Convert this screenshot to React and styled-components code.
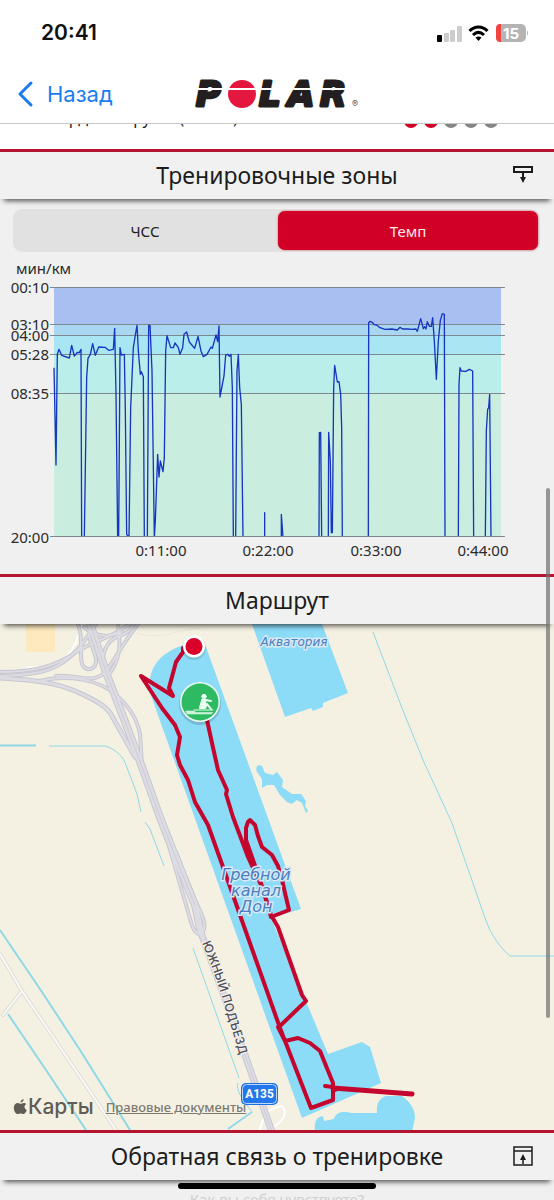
import React, { useState } from "react";
import styled, { createGlobalStyle } from "styled-components";

const RED = "#d10027";

const GlobalStyle = createGlobalStyle`
  *, *::before, *::after { box-sizing: border-box; }
  html, body { margin: 0; background: #f0f0f0; overflow: hidden; }
  body { font-family: "Noto Sans", "Open Sans", sans-serif; color: #1c1c1c; }
`;

const Screen = styled.div`
  position: relative;
  display: flex;
  flex-direction: column;
  height: 100vh;
  overflow: hidden;
  background: #f0f0f0;
`;

const StatusBar = styled.div`
  display: flex;
  flex: none;
  align-items: center;
  justify-content: space-between;
  height: 66px;
  padding: 0 26px 0 41px;
  background: #fff;
`;

const Clock = styled.time`
  font: 600 21px/22px Inter, sans-serif;
  color: #111;
`;

const StatusIcons = styled.svg`
  display: block;
  width: 92px;
  height: 20px;
`;

const NavBar = styled.header`
  display: grid;
  flex: none;
  grid-template-columns: 1fr auto 1fr;
  align-items: center;
  height: 57px;
  padding: 0 17px 2px;
  background: #fff;
`;

const BackButton = styled.button`
  display: flex;
  align-items: center;
  gap: 13px;
  justify-self: start;
  padding: 0;
  border: 0;
  background: none;
  color: #1a7cf0;
  font: 400 22px/28px Inter, sans-serif;

  svg { display: block; width: 17px; height: 28px; }
`;

const Logo = styled.svg`
  display: block;
  width: 170px;
  height: 30px;
  overflow: visible;
`;

const Content = styled.main`
  display: flex;
  flex: 1;
  flex-direction: column;
  min-height: 0;
  overflow: hidden;
  border-top: 1px solid #c8c8c8;
`;

const LoadRow = styled.div`
  display: flex;
  flex: none;
  align-items: flex-start;
  justify-content: space-between;
  height: 25px;
  padding: 0 56px 0 50px;
  overflow: hidden;
  background: #fff;
`;

const LoadLabel = styled.span`
  margin-top: -17px;
  font-size: 16px;
  line-height: 22px;
`;

const Dots = styled.span`
  display: flex;
  gap: 6px;
  margin-top: -10px;
`;

const Dot = styled.i`
  width: 14px;
  height: 14px;
  border-radius: 50%;
  background: ${(p) => (p.$on ? RED : "#858585")};
`;

const SectionHeader = styled.div`
  position: relative;
  z-index: 1;
  display: grid;
  flex: none;
  grid-template-columns: 1fr auto 1fr;
  align-items: center;
  height: 50px;
  padding: 0 21px 2px;
  border-top: 3px solid #b51530;
  background: #f1f1f1;
  box-shadow: 0 6px 5px -4px rgba(0, 0, 0, 0.65);
`;

const SectionTitle = styled.h2`
  grid-column: 2;
  margin: 0;
  font-size: 23px;
  font-weight: 400;
  line-height: 32px;
`;

const IconButton = styled.button`
  justify-self: end;
  padding: 0;
  border: 0;
  background: none;

  svg { display: block; width: 20px; height: 22px; }
`;

const Tabs = styled.div`
  display: flex;
  flex: none;
  gap: 3px;
  height: 43px;
  margin: 10px 14px 0 13px;
  padding: 2px;
  border-radius: 9px;
  background: #e1e1e1;
`;

const Tab = styled.button`
  flex: 1;
  padding: 0;
  border: 0;
  border-radius: 7px;
  background: ${(p) => (p.$active ? RED : "transparent")};
  box-shadow: ${(p) => (p.$active ? "0 0 2px #e0405c" : "none")};
  color: ${(p) => (p.$active ? "#ffe9ec" : "#1c1c1c")};
  font: 400 15px/20px "Noto Sans", sans-serif;
`;

const Chart = styled.svg`
  display: block;
  flex: none;
  width: 100%;

  text { font: 400 15px "Noto Sans", sans-serif; fill: #2b2b2b; }
`;

const MapPanel = styled.div`
  position: relative;
  flex: none;
`;

const MapCanvas = styled.svg`
  display: block;
  width: 100%;
  background: #f5f1e2;
`;

const MapCredits = styled.div`
  position: absolute;
  bottom: 10px;
  left: 13px;
  display: flex;
  align-items: center;
  gap: 12px;
  color: #5f5d56;
`;

const Brand = styled.span`
  display: flex;
  align-items: center;
  font: 500 21px/26px Inter, sans-serif;

  svg { display: block; width: 15px; height: 18px; }
`;

const LegalLink = styled.a`
  color: #7d7a72;
  font: 500 13px/16px "Noto Sans", sans-serif;
  text-decoration: underline;
`;

const Question = styled.p`
  flex: none;
  margin: 9px 0 0;
  color: #cfcfcf;
  font-size: 15px;
  line-height: 20px;
  text-align: center;
`;

const ScrollThumb = styled.div`
  position: absolute;
  z-index: 2;
  top: 488px;
  right: 4px;
  width: 4px;
  height: 530px;
  border-radius: 2px;
  background: rgba(110, 110, 110, 0.7);
`;

const HomeIndicator = styled.div`
  position: absolute;
  z-index: 2;
  bottom: 11px;
  left: 50%;
  width: 198px;
  height: 6px;
  margin-left: -99px;
  border-radius: 3px;
  background: #000;
`;

const zones = [
  { label: "00:10", top: 287, bottom: 324, fill: "#a9bff2" },
  { label: "03:10", top: 324, bottom: 335, fill: "#a9d6f0" },
  { label: "04:00", top: 335, bottom: 354, fill: "#a9e6f3" },
  { label: "05:28", top: 354, bottom: 393, fill: "#baeeea" },
  { label: "08:35", top: 393, bottom: 537, fill: "#c9eedf" },
];

const times = [
  { x: 161, label: "0:11:00" },
  { x: 268, label: "0:22:00" },
  { x: 376, label: "0:33:00" },
  { x: 483, label: "0:44:00" },
];

// Pace samples in thirds of a chart unit.
const paceFirstHalf =
  "162,320 168,612 172,280 177,265 185,283 208,291 215,253 223,285 232,274 238,275 243,265 245,829 253,829 260,350 264,292 271,280 278,248 286,283 296,258 315,259 326,268 340,265 344,202 348,400 353,829 356,829 360,260 364,282 373,280 376,450 380,820 387,829 392,440 400,260 406,222 411,193 415,270 421,340 424,332 430,347 433,829 442,829 446,193 450,193 456,330 463,829 466,780 473,580 477,648 481,600 489,632 493,590 497,270 501,224 512,260 520,260 525,246 535,260 540,280 548,260 552,220 560,213 568,243 584,262 594,226 603,270 610,287 621,280 633,258 637,262 648,222 653,242 657,195 660,408 672,345 677,282 684,280 688,286 693,280 697,380 700,829 707,829 711,330 715,280 719,380 724,430 729,829 794,829 794,755 794,829";
const paceSecondHalf =
  "34,829 34,760 39,829 147,829 148,515 152,514 155,829 175,829 176,514 181,600 184,815 187,815 191,380 194,313 202,363 207,362 212,400 215,500 217,829 295,829 296,185 300,181 308,185 312,191 320,192 330,200 345,205 365,204 382,207 390,199 398,204 415,204 425,205 438,204 442,211 452,173 460,203 464,197 468,204 472,182 478,196 484,196 488,170 493,240 499,355 505,240 511,178 517,158 523,160 525,829 565,829 567,370 570,320 574,330 588,331 598,325 608,330 611,829 646,829 649,510 653,445 656,440 659,400 663,829";

function PaceChart() {
  return (
    <Chart viewBox="0 252 554 322" role="img" aria-label="Темп, мин/км">
      <text x="16" y="274">мин/км</text>
      {zones.map((z) => (
        <rect key={z.label} x="54" y={z.top} width="447" height={z.bottom - z.top} fill={z.fill} />
      ))}
      {zones.map((z) => (
        <line key={z.label} x1="50" x2="505" y1={z.top + 0.5} y2={z.top + 0.5} stroke="#7f8790" />
      ))}
      {zones.map((z) => (
        <text key={z.label} x="49" y={z.top + 6} textAnchor="end">{z.label}</text>
      ))}
      <text x="49" y="543" textAnchor="end">20:00</text>
      {times.map((t) => (
        <text key={t.label} x={t.x} y="556" textAnchor="middle">{t.label}</text>
      ))}
      <clipPath id="plot"><rect x="50" y="287" width="455" height="249" /></clipPath>
      <g clipPath="url(#plot)">
        <g fill="none" stroke="#1636c0" strokeWidth="4" strokeLinejoin="round">
          <polyline points={paceFirstHalf} transform="translate(0 261) scale(.33333)" />
          <polyline points={paceSecondHalf} transform="translate(270 261) scale(.33333)" />
        </g>
      </g>
      <line x1="50" x2="505" y1="536.500" y2="536.500" stroke="#7f8790" />
    </Chart>
  );
}

const roads = [
  { w: 2, d: "M0 672 C40 672 58 664 75 653 C90 642 108 640 130 624" },
  { w: 2, d: "M0 676 C30 675 50 672 62 663 C78 652 84 642 96 624" },
  { w: 3, d: "M0 678 C40 680 62 684 84 695 C100 703 108 708 112 716 L135 757" },
  { w: 2, d: "M40 681 C58 676 88 676 110 690 C126 702 137 718 140 734 L142 766" },
  { w: 2, d: "M56 676 C76 674 90 684 103 674 C112 666 118 650 138 624" },
  { w: 2, d: "M110 673 C120 658 121 646 118 624" },
  { w: 2, d: "M78 624 C84 640 79 652 82 664 C86 672 95 670 96 662 C97 650 84 640 92 624" },
  { w: 2, d: "M104 672 C100 656 106 640 119 636 C126 634 131 630 134 624" },
  { w: 2, d: "M84 627 C96 638 110 637 122 632" },
  { w: 6, d: "M89 620 L107 675 L124 719 L142 767 L161 820 L179 866 L195 905 L201 933" },
  { w: 2, d: "M169 846 L180 884 L191 922 C194 934 202 938 204 929 C206 920 199 909 194 898 L176 852" },
  { w: 5, d: "M200 930 L219 982 L244 1052 L272 1132" },
];

const routePath =
  "M207 720 L212 743 L218 770 L227 790 L226 794 L233 817 L248 857 L254 870 L262 887 L270 913 L271 917 L289 910 L282 880 L278 866 L272 855 L262 847 L258 836 L255 825 L250 820 L248 822 L246 828 L246 840 L253 860 L260 880 L271 915 L278 927 L302 995 L306 1001 L281 1025 L278 1027 L285 1041 L298 1038 L310 1043 L320 1051 L333 1083 L333 1100 L311 1108 L280 1028 L223 867 L208 825 L195 802 L188 780 L180 765 L177 755 L180 737 L175 725 L162 708 L141 676 L173 696 L169 688 L176 662 L183 652 L183 648";

const waterLabel = {
  fontFamily: '"DejaVu Sans", sans-serif',
  fontStyle: "oblique",
  fontWeight: 400,
  fill: "#4a80c0",
  stroke: "#d5e9f7",
  strokeWidth: 3,
  paintOrder: "stroke",
  textAnchor: "middle",
};

function RouteMap() {
  return (
    <MapPanel>
      <MapCanvas viewBox="0 624 554 506" role="img" aria-label="Маршрут тренировки">
        <rect x="26" y="620" width="29" height="32" rx="2" fill="#fde9bd" />
        <g fill="#8cdbf7">
          <path d="M149 690 C149 664 162 651 190 643 L206 647 L301 909 L271 918 L328 1054 L362 1042 L370 1047 L381 1083 L302 1118 Z" />
          <path d="M252 624 L285 717 L311 708 L313 711 L323 707 L323 703 L348 693 L322 624 Z" />
          <path d="M257 772 C255 766 258 764 262 766 L265 773 L273 775 L277 772 L283 780 L282 787 L292 794 L301 794 L306 801 L305 806 L308 811 L306 813 L302 803 L297 800 L292 804 L287 802 L280 795 L274 785 L267 785 L262 788 L262 779 Z" />
          <path d="M315 1132 C314 1122 316 1117 323 1116 L324 1121 L334 1119 C336 1111 344 1111 352 1113 L377 1113 C376 1103 380 1098 386 1096 L402 1096 C412 1103 415 1111 415 1118 L412 1132 Z" />
        </g>
        <g fill="none" stroke="#8fd8e8" strokeWidth="1">
          <path d="M0 745.500 H36" strokeWidth="2" />
          <path d="M49 746 H106 C118 751 123 757 126 765 L137 794 L141 812 M145 822 L150 829 L164 866" />
          <path d="M373 632 L402 708 L423 760 L452 823 L485 918 C492 938 502 949 510 956 H554" />
          <path d="M0 930 L42 992 L80 1050 L130 1130 M8 1014 L46 1070 L86 1130 M252 1112 L228 1129" strokeWidth="2" />
          <path d="M193 948 L239 1078 M238 1083 C236 1090 241 1098 252 1112" />
        </g>
        <g fill="none" strokeLinecap="round">
          <path d="M0 954 L22 991 L116 1130 M22 991 L3 1015" stroke="#dedcda" strokeWidth="4" />
          <path d="M0 954 L22 991 L116 1130 M22 991 L3 1015" stroke="#fbf9f4" strokeWidth="2" />
          <path d="M27 672 C22 665 36 668 52 666 C66 660 72 652 76 642 L82 624 M260 1130 C264 1111 271 1108 282 1106 C288 1112 284 1120 275 1126" stroke="#fff" strokeWidth="2" />
          <path d="M136 633 C158 640 170 632 200 628" stroke="#eae7e1" />
          {roads.map((r) => <path key={r.d} d={r.d} stroke="#c8c6d1" strokeWidth={r.w + 2} />)}
          {roads.map((r) => <path key={r.d} d={r.d} stroke="#dddce3" strokeWidth={r.w} />)}
          <path d="M89 620 L107 675 L124 719 L142 767 L161 820 L179 866 L195 905 M244 1052 L272 1132" stroke="#cdccd6" />
        </g>
        <g fill="none" stroke="#c4062f" strokeWidth="4" strokeLinecap="round" strokeLinejoin="round">
          <path d={routePath} />
          <path d="M325 1086 L333 1087" />
          <path d="M333 1088 L412 1094" strokeWidth="5" />
          <path d="M332 1087 L339 1089 L333 1092 Z" fill="#c4062f" strokeWidth="2" />
        </g>

        <text x="294" y="646" fontSize="12" {...waterLabel}>Акватория</text>
        <text x="256" y="880" fontSize="16" {...waterLabel}>Гребной</text>
        <text x="256" y="896" fontSize="16" {...waterLabel}>канал</text>
        <text x="256" y="912" fontSize="16" {...waterLabel}>Дон</text>

        <path id="road-name" d="M202 943 C212 967 217 980 224 1004 C230 1026 237 1042 246 1080" fill="none" />
        <text fontFamily="Inter, sans-serif" fontSize="12" fontWeight="500" fill="#4f4d57" stroke="#f7f4ea" strokeWidth="2" paintOrder="stroke">
          <textPath href="#road-name">ЮЖНЫЙ ПОДЪЕЗД</textPath>
        </text>

        <rect x="241" y="1083" width="37" height="22" rx="5" fill="#1d6fe0" />
        <rect x="242.500" y="1084.500" width="34" height="19" rx="4" fill="#2377ea" stroke="#b9d8fb" />
        <text x="259.500" y="1098" fontFamily="Roboto, sans-serif" fontSize="12" fontWeight="700" fill="#fff" textAnchor="middle">A135</text>

        <circle cx="194" cy="648" r="12" fill="#000" opacity=".12" />
        <circle cx="194" cy="646.500" r="11" fill="#fff" />
        <circle cx="194" cy="646.500" r="8.500" fill="#da0029" />
        <circle cx="200" cy="704" r="21" fill="#000" opacity=".15" />
        <circle cx="200" cy="702" r="20" fill="#e9f9ee" />
        <circle cx="200" cy="702" r="18.500" fill="#2dba62" />
        <g fill="#eafff0" stroke="#eafff0" strokeLinecap="round" strokeLinejoin="round">
          <circle cx="204" cy="696.500" r="2.200" />
          <path d="M202 700 L206 700 L211 701 M202 701 L200 708 H205 L207 704 L211 709" strokeWidth="2" fill="none" />
          <path d="M202 701 L206 701 L205 707 L200 708 Z" />
          <path d="M186 711 H194 L196 712.500 H213 L211 714 H187 Z" strokeWidth=".6" opacity=".85" />
          <path d="M194 710 H213" strokeWidth="1" />
        </g>
      </MapCanvas>
      <MapCredits>
        <Brand>
          <svg viewBox="0 0 15 18" aria-hidden="true" fill="currentColor">
            <path d="M10.700 1c.1 1.800-1.500 3.500-3.200 3.500C7.300 2.800 9 1.200 10.700 1zM13.200 6.100c-2.500 1.500-2 5 .6 6-.7 2-2 4-3.500 4-1.100 0-1.500-.7-2.800-.7s-1.700.7-2.800.7C2.500 16.100.8 12.600.8 9.800c0-3.200 2-4.900 4-4.900 1.200 0 2.100.8 2.900.8.800 0 1.700-.8 3.200-.8 1 0 1.800.5 2.300 1.200z" />
          </svg>
          Карты
        </Brand>
        <LegalLink href="#legal">Правовые документы</LegalLink>
      </MapCredits>
    </MapPanel>
  );
}

function PhoneStatus() {
  return (
    <StatusIcons viewBox="0 0 92 20" role="img" aria-label="Сеть, Wi-Fi, заряд 15%">
      <rect x="1" y="12" width="5" height="7" rx="1" fill="#000" />
      <rect x="8" y="10" width="5" height="9" rx="1" fill="#ccc" />
      <rect x="14" y="7" width="5" height="12" rx="1" fill="#ccc" />
      <rect x="21" y="3" width="5" height="16" rx="1" fill="#ccc" />
      <g fill="none" stroke="#000" strokeWidth="3">
        <path d="M33.500 8 C38.500 2.600 46.500 2.600 51.500 8" />
        <path d="M37 12 C40.500 8.700 44.500 8.700 48 12" />
      </g>
      <path d="M39.500 14.500 C41.500 13 43.500 13 45.500 14.500 L42.500 18 Z" />
      <rect x="60" y="1" width="30" height="18" rx="5" fill="#b4b4b4" />
      <path d="M64 1 H65 V19 H64 C61.500 19 60 17.500 60 14.500 V5.500 C60 2.500 61.500 1 64 1 Z" fill="#f0453f" />
      <path d="M91 7.500 C92.500 8.500 92.500 11.500 91 12.500 Z" fill="#b4b4b4" />
      <text x="75" y="15.500" fontFamily="Inter, sans-serif" fontSize="15" fontWeight="700" fill="#fff" textAnchor="middle">15</text>
    </StatusIcons>
  );
}

function PolarLogo() {
  const letter = {
    fontFamily: '"DejaVu Sans", sans-serif',
    fontSize: 34,
    fontWeight: 700,
    fontStyle: "oblique",
    fill: "#231f20",
    stroke: "#231f20",
    strokeWidth: 3,
    strokeLinejoin: "round",
  };
  return (
    <Logo viewBox="0 0 170 30" role="img" aria-label="Polar">
      <text x="4" y="27" {...letter}>P</text>
      <text x="67" y="27" {...letter}>L</text>
      <text x="96" y="27" {...letter}>A</text>
      <text x="128" y="27" {...letter}>R</text>
      <circle cx="50" cy="15" r="14" fill="#e4173e" />
      <rect x="0" y="9" width="162" height="2" fill="#fff" />
      <text x="160" y="28" fontFamily="Inter, sans-serif" fontSize="9" fill="#555">®</text>
    </Logo>
  );
}

export default function App() {
  const [tab, setTab] = useState("pace");
  return (
    <Screen>
      <GlobalStyle />
      <StatusBar>
        <Clock>20:41</Clock>
        <PhoneStatus />
      </StatusBar>
      <NavBar>
        <BackButton type="button">
          <svg viewBox="0 0 17 28" aria-hidden="true">
            <path d="M14 3 L3 14 L14 25" fill="none" stroke="currentColor" strokeWidth="3" strokeLinecap="round" strokeLinejoin="round" />
          </svg>
          Назад
        </BackButton>
        <PolarLogo />
      </NavBar>
      <Content>
        <LoadRow>
          <LoadLabel>Кардионагрузка (TRIMP)</LoadLabel>
          <Dots>
            {[true, true, false, false, false].map((on, i) => <Dot key={i} $on={on} />)}
          </Dots>
        </LoadRow>

        <SectionHeader>
          <SectionTitle>Тренировочные зоны</SectionTitle>
          <IconButton type="button" aria-label="Свернуть">
            <svg viewBox="0 0 20 22" fill="none" stroke="#1c1c1c" strokeWidth="2">
              <path d="M1 3 H19 V8 H1 Z M10 8 V14" />
              <path d="M7 13 H13 L10 19 Z" fill="#1c1c1c" stroke="none" />
            </svg>
          </IconButton>
        </SectionHeader>
        <Tabs role="group" aria-label="Показатель">
          <Tab type="button" $active={tab === "hr"} aria-pressed={tab === "hr"} onClick={() => setTab("hr")}>ЧСС</Tab>
          <Tab type="button" $active={tab === "pace"} aria-pressed={tab === "pace"} onClick={() => setTab("pace")}>Темп</Tab>
        </Tabs>
        <PaceChart />

        <SectionHeader>
          <SectionTitle>Маршрут</SectionTitle>
        </SectionHeader>
        <RouteMap />

        <SectionHeader>
          <SectionTitle>Обратная связь о тренировке</SectionTitle>
          <IconButton type="button" aria-label="Развернуть">
            <svg viewBox="0 0 20 22" fill="none" stroke="#1c1c1c" strokeWidth="1.500">
              <path d="M1 2 H19 V20 H1 Z M1 6 H19 M10 19 V12" />
              <path d="M7 15 H13 L10 9 Z" fill="#1c1c1c" stroke="none" />
            </svg>
          </IconButton>
        </SectionHeader>
        <Question>Как вы себя чувствуете?</Question>
      </Content>
      <ScrollThumb />
      <HomeIndicator />
    </Screen>
  );
}
